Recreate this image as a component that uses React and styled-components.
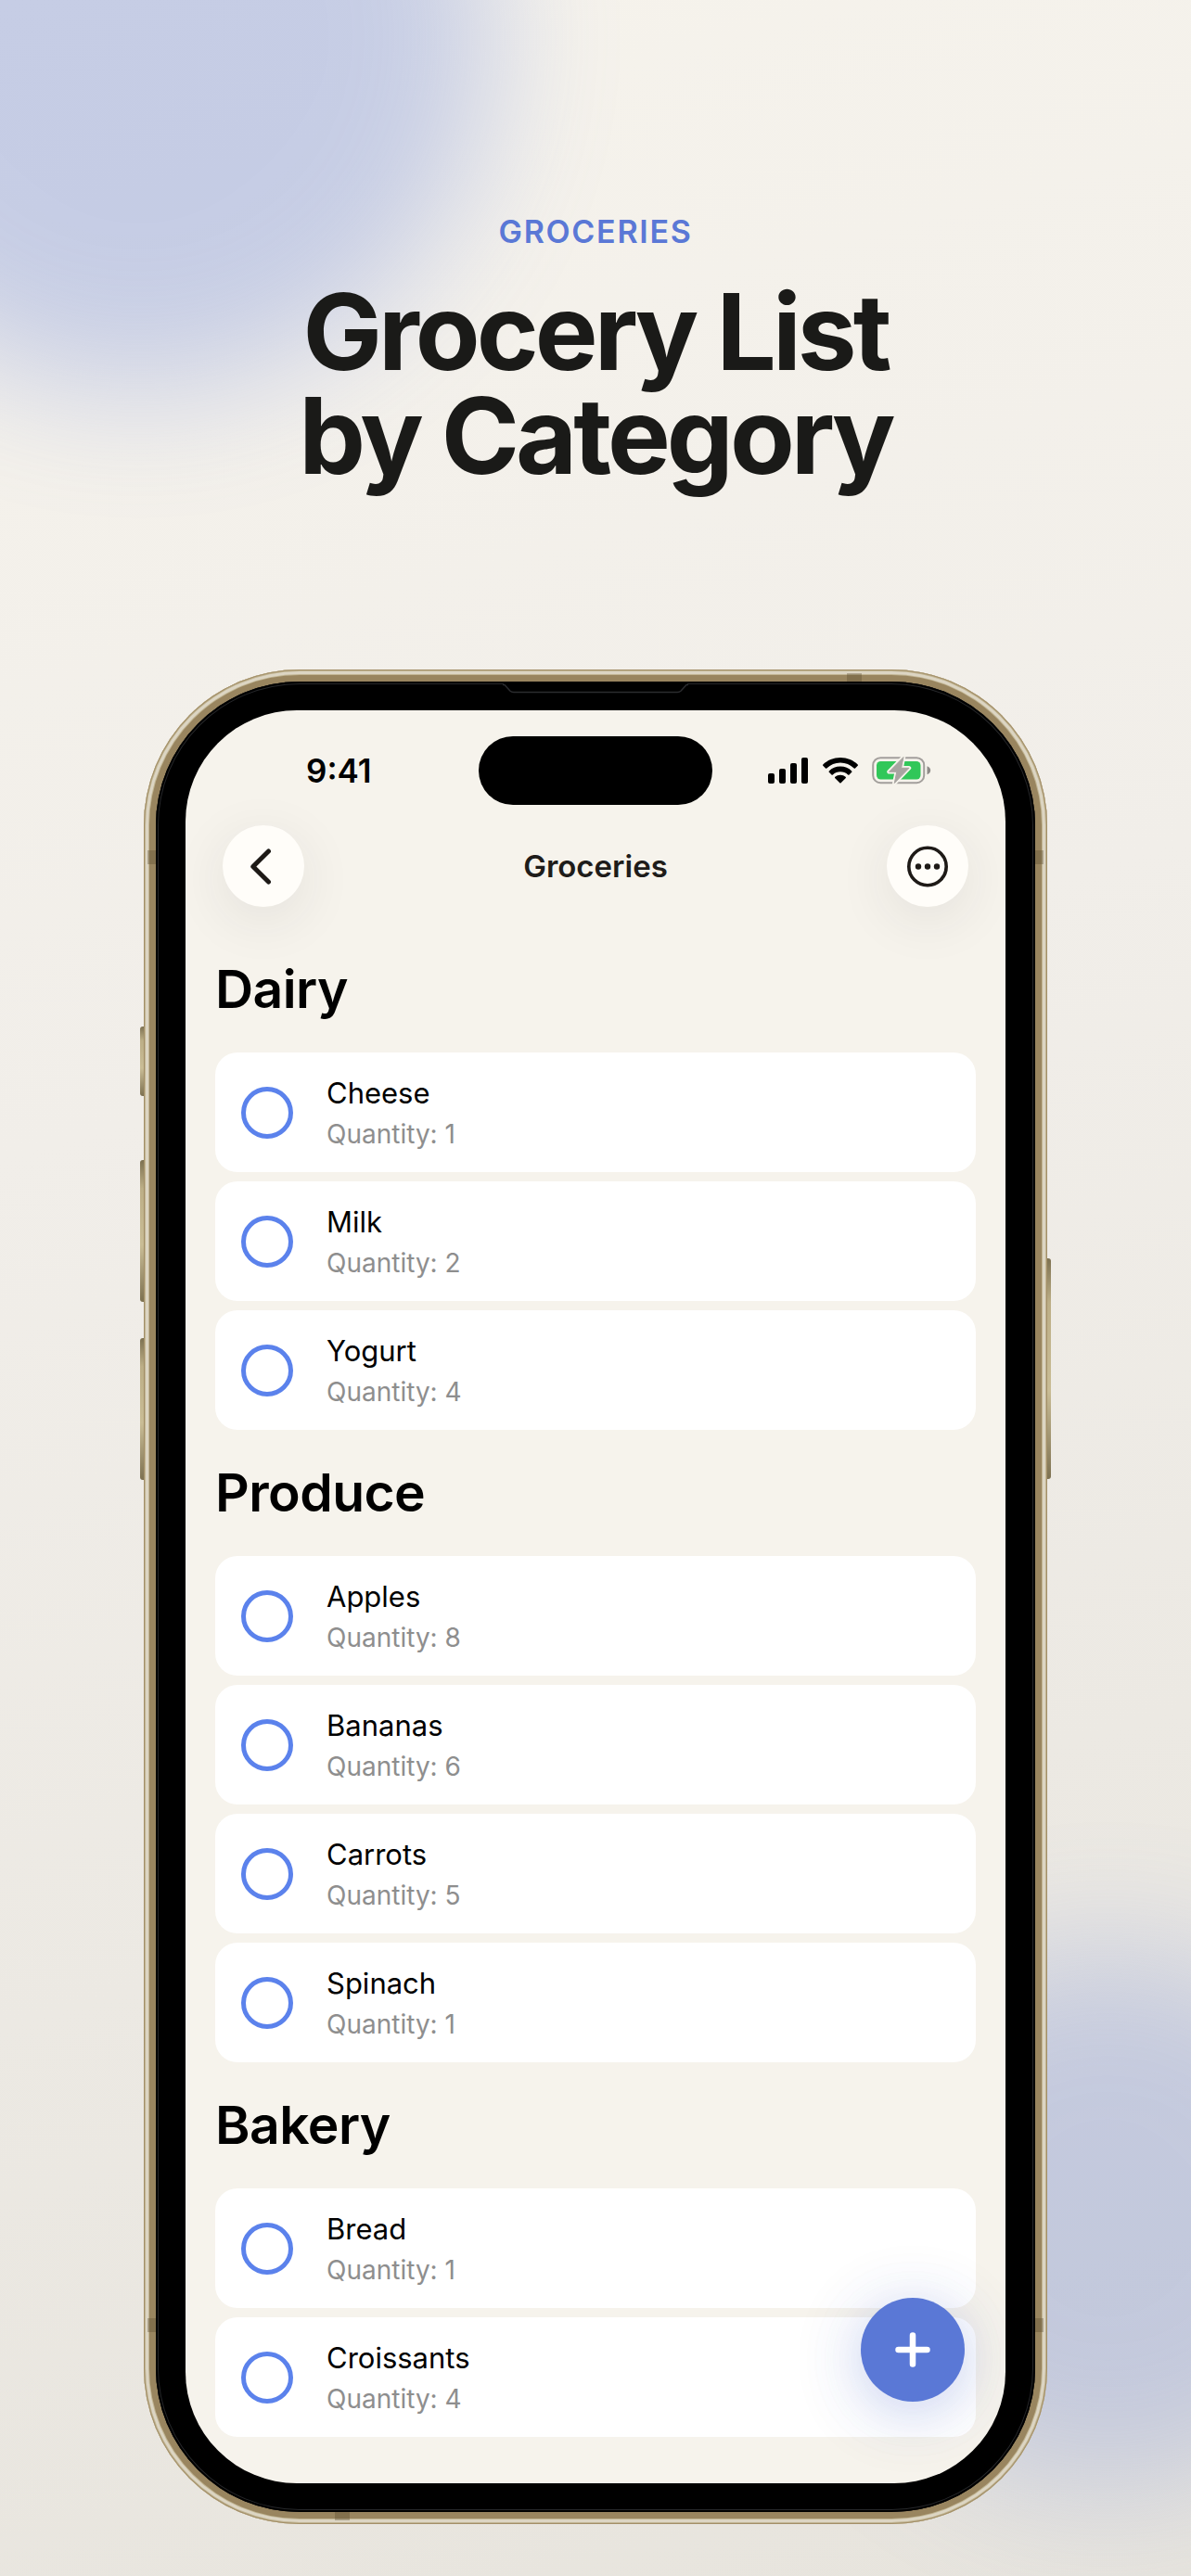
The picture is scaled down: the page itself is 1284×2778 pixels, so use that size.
import React, { useState } from 'react';
import styled, { createGlobalStyle } from 'styled-components';

const GlobalStyle = createGlobalStyle`
  * {
    box-sizing: border-box;
  }

  body {
    margin: 0;
    font-family: Inter, 'Liberation Sans', sans-serif;
    -webkit-font-smoothing: antialiased;
  }
`;

const Page = styled.main`
  position: relative;
  z-index: 0;
  display: flex;
  flex-direction: column;
  align-items: center;
  gap: 196px;
  min-height: 100vh;
  padding: 230px 24px 56px;
  overflow: hidden;
  background: linear-gradient(165deg, #f6f3ec 0%, #f1eee9 40%, #e7e4dd 100%);
`;

const Glow = styled.div`
  position: absolute;
  z-index: -1;
  width: ${(p) => p.$size}px;
  height: ${(p) => p.$size}px;
  border-radius: 50%;
  background: #5a78d6;
  opacity: ${(p) => p.$strength};
  filter: blur(72px);
`;

const TopGlow = styled(Glow)`
  top: -340px;
  left: -230px;
`;

const BottomGlow = styled(Glow)`
  right: -200px;
  bottom: 96px;
`;

const Hero = styled.header`
  display: flex;
  flex-direction: column;
  gap: 32px;
  text-align: center;
`;

const Eyebrow = styled.p`
  margin: 0;
  font-size: 34px;
  line-height: 40px;
  font-weight: 600;
  letter-spacing: 0.05em;
  text-transform: uppercase;
  color: #5a78d6;
`;

const Headline = styled.h1`
  margin: 0;
  font-size: 114px;
  line-height: 112px;
  font-weight: 700;
  letter-spacing: -4px;
  color: #1a1a18;
`;

/* phone body: gold metal rim, then the black bezel */
const Phone = styled.div`
  position: relative;
  width: 100%;
  max-width: 974px;
  padding: 13px;
  border-radius: 168px;
  background: #99855f;
  box-shadow:
    inset 0 0 0 1px #a38f68,
    inset 0 0 0 2px #c0b492,
    inset 0 0 0 5px #dcd5c3,
    inset 0 0 0 6px #c0b492;
`;

const Bezel = styled.div`
  position: relative;
  padding: 31px 32px;
  border-radius: 155px;
  background: #000;
  box-shadow: inset 0 0 0 2px #000, inset 0 0 0 3px #26272a;
`;

const SideKey = styled.span`
  position: absolute;
  z-index: -1;
  top: ${(p) => p.$top}px;
  ${(p) => p.$side}: -4px;
  width: 8px;
  height: ${(p) => p.$length}px;
  border-radius: 3px;
  background: linear-gradient(#7d7151, #bcae86 20%, #c9bc95 60%, #7d7151);
`;

const RimBand = styled.span`
  position: absolute;
  background: rgba(90, 75, 45, 0.35);
`;

const SideBand = styled(RimBand)`
  ${(p) => p.$edge}: ${(p) => p.$offset}px;
  ${(p) => p.$side}: 4px;
  width: 9px;
  height: 15px;
`;

const TopBand = styled(RimBand)`
  top: 4px;
  right: 200px;
  width: 16px;
  height: 9px;
`;

const BottomBand = styled(RimBand)`
  bottom: 4px;
  left: 206px;
  width: 16px;
  height: 9px;
`;

const Earpiece = styled.svg`
  position: absolute;
  top: 1px;
  left: 50%;
  margin-left: -100px;
`;

const Screen = styled.section`
  position: relative;
  padding: 28px 0 50px;
  border-radius: 120px;
  overflow: hidden;
  background: #f6f3ec;
`;

const StatusBar = styled.div`
  display: grid;
  grid-template-columns: 1fr 252px 1fr;
  align-items: center;
`;

const Time = styled.time`
  padding-left: 130px;
  font-size: 35px;
  line-height: 40px;
  font-weight: 600;
  color: #000;
`;

const Island = styled.div`
  height: 74px;
  border-radius: 37px;
  background: #000;
`;

const StatusIcons = styled.div`
  display: flex;
  justify-content: flex-end;
  align-items: center;
  gap: 15px;
  padding-right: 80px;
`;

const NavBar = styled.nav`
  display: flex;
  justify-content: space-between;
  align-items: center;
  padding: 22px 40px 21px;
`;

const NavTitle = styled.h2`
  margin: 0;
  font-size: 33px;
  line-height: 40px;
  font-weight: 600;
  color: #1e1c1a;
`;

const RoundButton = styled.button`
  display: flex;
  align-items: center;
  justify-content: center;
  width: 88px;
  height: 88px;
  padding: 0;
  border: 0;
  border-radius: 50%;
  background: #fffdf9;
  color: #1e1a17;
  box-shadow: 0 14px 60px rgba(40, 45, 60, 0.09);
  cursor: pointer;
`;

const Category = styled.section`
  padding: 0 32px;
`;

const CategoryTitle = styled.h3`
  margin: 0;
  padding: 36px 0;
  font-size: 57px;
  line-height: 64px;
  font-weight: 600;
  letter-spacing: -0.01em;
  color: #000;
`;

const Items = styled.ul`
  display: flex;
  flex-direction: column;
  gap: 10px;
  margin: 0;
  padding: 0;
  list-style: none;
`;

const ItemCard = styled.label`
  display: flex;
  align-items: center;
  gap: 36px;
  padding: 22px 28px 21px;
  border-radius: 24px;
  background: #fff;
  cursor: pointer;
`;

const Check = styled.input`
  appearance: none;
  flex: none;
  width: 56px;
  height: 56px;
  margin: 0;
  border: 5px solid #5b82ec;
  border-radius: 50%;
  background: transparent;

  &:checked {
    background: #5b82ec;
  }
`;

const ItemText = styled.span`
  display: flex;
  flex-direction: column;
  gap: 2px;
`;

const ItemName = styled.span`
  font-size: 31px;
  line-height: 44px;
  color: #000;
`;

const Quantity = styled.span`
  font-size: 28px;
  line-height: 40px;
  color: #8e8e8e;
`;

const AddButton = styled.button`
  position: absolute;
  right: 44px;
  bottom: 88px;
  display: flex;
  align-items: center;
  justify-content: center;
  width: 112px;
  height: 112px;
  padding: 0;
  border: 0;
  border-radius: 50%;
  background: #5a78d6;
  color: #fff;
  box-shadow:
    0 10px 60px rgba(90, 120, 230, 0.26),
    0 10px 90px rgba(60, 80, 120, 0.1);
  cursor: pointer;
`;

const categories = [
  {
    name: 'Dairy',
    items: [
      { name: 'Cheese', quantity: 1 },
      { name: 'Milk', quantity: 2 },
      { name: 'Yogurt', quantity: 4 },
    ],
  },
  {
    name: 'Produce',
    items: [
      { name: 'Apples', quantity: 8 },
      { name: 'Bananas', quantity: 6 },
      { name: 'Carrots', quantity: 5 },
      { name: 'Spinach', quantity: 1 },
    ],
  },
  {
    name: 'Bakery',
    items: [
      { name: 'Bread', quantity: 1 },
      { name: 'Croissants', quantity: 4 },
    ],
  },
];

function SignalIcon() {
  return (
    <svg width="44" height="28" viewBox="0 0 44 28" aria-hidden="true">
      <rect x="0" y="17" width="7" height="11" rx="2" />
      <rect x="12" y="12" width="7" height="16" rx="2" />
      <rect x="24" y="6" width="7" height="22" rx="2" />
      <rect x="36" y="0" width="7" height="28" rx="2" />
    </svg>
  );
}

function WifiIcon() {
  return (
    <svg width="38" height="28" viewBox="0 0 38 28" aria-hidden="true">
      <path d="M19 0C26.400 0 33.100 2.900 37.700 7.500a.9.9 0 0 1 0 1.300l-2.700 2.700a.9.900 0 0 1-1.300 0A21 21 0 0 0 19 5.500 21 21 0 0 0 4.300 11.500a.9.9 0 0 1-1.300 0L.3 8.800a.9.9 0 0 1 0-1.300C4.900 2.900 11.600 0 19 0Z" />
      <path d="M19 9.600c4.800 0 9.100 1.900 12.200 4.900a.9.9 0 0 1 0 1.300l-2.700 2.700a.9.9 0 0 1-1.300 0A12 12 0 0 0 19 15.200a12 12 0 0 0-8.200 3.300.9.9 0 0 1-1.300 0l-2.700-2.700a.9.9 0 0 1 0-1.300C9.900 11.500 14.200 9.600 19 9.600Z" />
      <path d="M19 18.800c2.200 0 4.100.8 5.600 2a.9.9 0 0 1 0 1.400l-5 5a.9.9 0 0 1-1.300 0l-5-5a.9.900 0 0 1 0-1.400c1.600-1.200 3.500-2 5.700-2Z" />
    </svg>
  );
}

function BatteryIcon() {
  const bolt = 'M34 0.500 18.500 16.300h8.300L24.300 28.500 40 12.300h-8.400Z';
  return (
    <svg width="64" height="30" viewBox="0 0 64 30" aria-hidden="true">
      <rect x="1.200" y="1.200" width="55" height="27" rx="8" fill="none" stroke="#a39f9c" strokeWidth="2" />
      <rect x="5" y="5" width="47.500" height="19.500" rx="4.500" fill="#31c759" />
      <path d="M59.500 10.200c2.200.8 3.700 2.500 3.700 4.500s-1.500 3.700-3.700 4.500Z" fill="#8f8b88" />
      <path d={bolt} fill="#f6f3ec" stroke="#f6f3ec" strokeWidth="4.500" strokeLinejoin="round" />
      <path d={bolt} fill="#a8a4a1" stroke="#a8a4a1" strokeWidth="1" strokeLinejoin="round" />
    </svg>
  );
}

function BackIcon() {
  return (
    <svg width="28" height="42" viewBox="0 0 28 42" fill="none" stroke="currentColor" strokeWidth="5" strokeLinecap="round" strokeLinejoin="round" aria-hidden="true">
      <path d="M19.500 5 2.800 21.500 19.500 38" />
    </svg>
  );
}

function MoreIcon() {
  return (
    <svg width="46" height="46" viewBox="0 0 46 46" fill="currentColor" aria-hidden="true">
      <circle cx="23" cy="23.500" r="20.200" fill="none" stroke="currentColor" strokeWidth="3.600" />
      <circle cx="13" cy="23.500" r="3.200" />
      <circle cx="23" cy="23.500" r="3.200" />
      <circle cx="33" cy="23.500" r="3.200" />
    </svg>
  );
}

function PlusIcon() {
  return (
    <svg width="38" height="38" viewBox="0 0 38 38" fill="none" stroke="currentColor" strokeWidth="6.500" strokeLinecap="round" aria-hidden="true">
      <path d="M19 3.500v31M3.500 19h31" />
    </svg>
  );
}

function App() {
  const [checked, setChecked] = useState({});

  const toggle = (name) => {
    setChecked((prev) => ({ ...prev, [name]: !prev[name] }));
  };

  return (
    <>
      <GlobalStyle />
      <Page>
        <TopGlow $size={760} $strength={0.3} />
        <BottomGlow $size={580} $strength={0.26} />

        <Hero>
          <Eyebrow>Groceries</Eyebrow>
          <Headline>
            Grocery List
            <br />
            by Category
          </Headline>
        </Hero>

        <Phone>
          {/* volume keys on the left, power key on the right */}
          <SideKey $side="left" $top={385} $length={75} />
          <SideKey $side="left" $top={529} $length={153} />
          <SideKey $side="left" $top={721} $length={153} />
          <SideKey $side="right" $top={635} $length={238} />
          <SideBand $side="left" $edge="top" $offset={195} />
          <SideBand $side="right" $edge="top" $offset={195} />
          <SideBand $side="left" $edge="bottom" $offset={207} />
          <SideBand $side="right" $edge="bottom" $offset={207} />
          <TopBand />
          <BottomBand />

          <Bezel>
            <Earpiece width="200" height="12" viewBox="0 0 204 12" fill="none" aria-hidden="true">
              <path d="M1 0h202v3h-2l-5 6q-2 2-4 2H12q-2 0-4-2L3 3H1Z" fill="#000" />
              <path d="M0 2.500h2L8 9q1.500 1.500 4 1.500h180q2.500 0 4-1.500l6-6.500h2" stroke="#2b2c2f" strokeWidth="1.500" />
            </Earpiece>
            <Screen>
              <StatusBar>
                <Time>9:41</Time>
                <Island />
                <StatusIcons>
                  <SignalIcon />
                  <WifiIcon />
                  <BatteryIcon />
                </StatusIcons>
              </StatusBar>

              <NavBar>
                <RoundButton type="button" aria-label="Back">
                  <BackIcon />
                </RoundButton>
                <NavTitle>Groceries</NavTitle>
                <RoundButton type="button" aria-label="More options">
                  <MoreIcon />
                </RoundButton>
              </NavBar>

              {categories.map((category) => (
                <Category key={category.name}>
                  <CategoryTitle>{category.name}</CategoryTitle>
                  <Items>
                    {category.items.map((item) => (
                      <li key={item.name}>
                        <ItemCard>
                          <Check
                            type="checkbox"
                            checked={!!checked[item.name]}
                            onChange={() => toggle(item.name)}
                          />
                          <ItemText>
                            <ItemName>{item.name}</ItemName>
                            <Quantity>Quantity: {item.quantity}</Quantity>
                          </ItemText>
                        </ItemCard>
                      </li>
                    ))}
                  </Items>
                </Category>
              ))}

              <AddButton type="button" aria-label="Add item">
                <PlusIcon />
              </AddButton>
            </Screen>
          </Bezel>
        </Phone>
      </Page>
    </>
  );
}

export default App;
